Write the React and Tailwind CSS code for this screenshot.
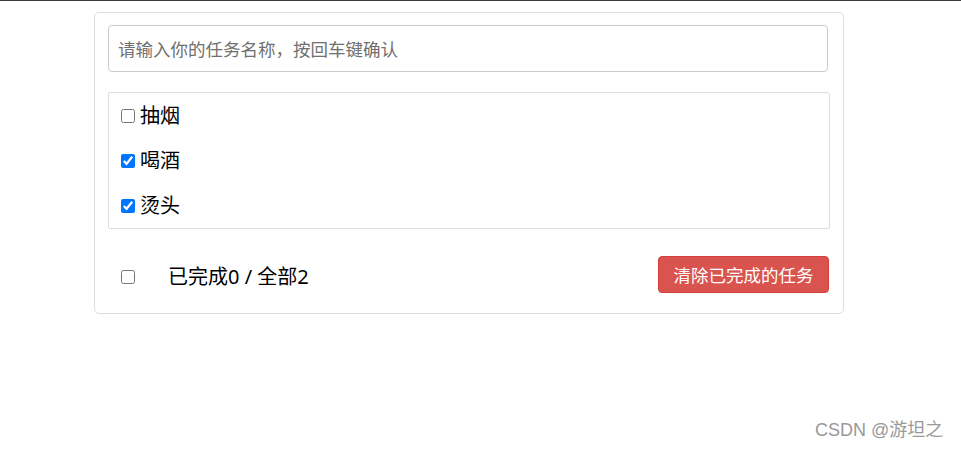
import React from "react";

const items = [
  { id: 1, name: "抽烟", done: false },
  { id: 2, name: "喝酒", done: true },
  { id: 3, name: "烫头", done: true },
];

export default function App() {
  return (
    <div className="relative w-[961px] h-[449px] bg-white overflow-hidden font-['Noto_Sans','Noto_Sans_CJK_SC',sans-serif] text-black">
      <div className="h-[1px] bg-[#3a3a3a]" />
      <div className="ml-[94px] mt-[11px] w-[750px] border border-[#dddddd] rounded-[5px] px-[13px] pt-[12px] pb-[20px]">
        <input
          className="block w-[720px] h-[47px] border border-[#cccccc] rounded-[4px] px-[9px] text-[17.5px] leading-[24px] outline-none placeholder:text-[#707070]"
          placeholder="请输入你的任务名称，按回车键确认"
        />
        <ul className="mt-[20px] border border-[#dddddd] rounded-[2px]">
          {items.map((it) => (
            <li key={it.id} className="h-[45px] flex items-center pl-[12px]">
              <input type="checkbox" defaultChecked={it.done} className="w-[14px] h-[14px]" />
              <span className="ml-[5px] text-[20px] leading-[24px]">{it.name}</span>
            </li>
          ))}
        </ul>
        <div className="mt-[27px] flex items-center justify-between">
          <div className="flex items-center pl-[13px] mt-[5px]">
            <input type="checkbox" className="w-[14px] h-[14px]" />
            <span className="ml-[33px] text-[20px] leading-[24px]">已完成0 / 全部2</span>
          </div>
          <button className="mr-[1px] w-[171px] h-[37px] bg-[#d9534f] border border-[#d43f3a] rounded-[4px] text-white text-[17.5px] leading-[24px]">
            清除已完成的任务
          </button>
        </div>
      </div>
      <div className="absolute left-[815px] top-[417px] text-[18px] leading-[26px] text-[#999999] font-['Liberation_Sans','Noto_Sans_CJK_SC',sans-serif]">
        CSDN @游坦之
      </div>
    </div>
  );
}
